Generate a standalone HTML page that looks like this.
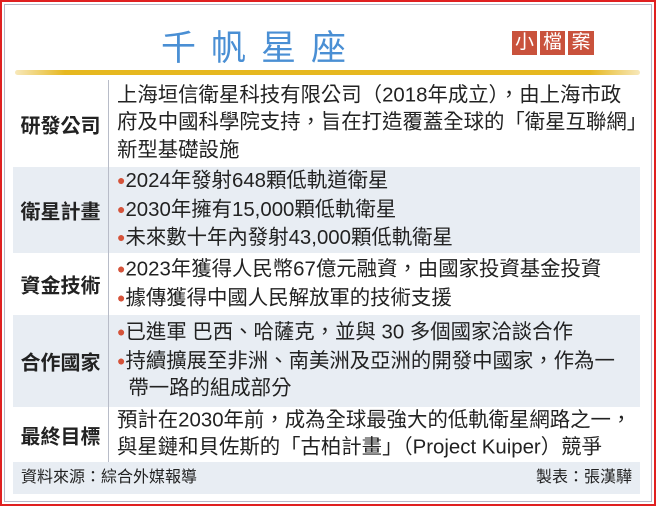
<!DOCTYPE html>
<html><head><meta charset="utf-8"><style>
*{margin:0;padding:0;box-sizing:border-box}
body{width:656px;height:506px;background:#fff;font-family:"Liberation Sans","Noto Sans CJK TC",sans-serif;color:#222;position:relative;overflow:hidden}
.outer{position:absolute;left:0;top:0;width:656px;height:506px;border:2px solid #e02020}
.inner{position:absolute;left:4px;top:4px;width:648px;height:498px;border:1px solid #b8b8c8}
.title{position:absolute;left:161px;top:20px;font-size:35px;color:#4a8fd4;letter-spacing:15px;font-weight:400}
.tag{position:absolute;top:31px;height:24px;width:25px;background:#c9523c;color:#fff;font-size:19px;text-align:center;line-height:24px}
.gold{position:absolute;left:15px;top:70px;width:625px;height:5px;background:linear-gradient(90deg,rgba(230,180,30,0.3),#e6b820 8%,#e6b820 92%,rgba(230,180,30,0.3));border-radius:3px}
.row{position:absolute;left:13px;width:627px}
.g{background:#e8edf3}
.lab{position:absolute;left:0;width:95px;font-size:20px;text-align:center;font-weight:600;top:50%;transform:translateY(-50%)}
.txt{position:absolute;left:104px;right:0;font-size:20.4px;line-height:27.7px;top:50%;transform:translateY(-50%);white-space:nowrap;font-variant-east-asian:full-width}
.b{color:#d5533a;font-size:14px;vertical-align:2px}
.vl{position:absolute;left:108px;top:80px;width:1px;height:382px;background:#b8bcc8}
.foot{position:absolute;left:13px;top:462px;width:627px;height:32px;background:#e8edf3;font-size:16px;line-height:32px;padding:0 8px}
</style></head><body>
<div class="outer"></div><div class="inner"></div>
<div class="title">千帆星座</div>
<div class="tag" style="left:512px">小</div><div class="tag" style="left:540px">檔</div><div class="tag" style="left:568px;width:26px">案</div>
<div class="gold"></div>
<div class="row" style="top:80px;height:87px"><div class="lab">研發公司</div><div class="txt">上海垣信衛星科技有限公司（2018年成立），由上海市政<br>府及中國科學院支持，旨在打造覆蓋全球的「衛星互聯網」<br>新型基礎設施</div></div>
<div class="row g" style="top:167px;height:86px"><div class="lab">衛星計畫</div><div class="txt"><span class="b">●</span>2024年發射648顆低軌道衛星<br><span class="b">●</span>2030年擁有15,000顆低軌衛星<br><span class="b">●</span>未來數十年內發射43,000顆低軌衛星</div></div>
<div class="row" style="top:253px;height:62px"><div class="lab">資金技術</div><div class="txt"><span class="b">●</span>2023年獲得人民幣67億元融資，由國家投資基金投資<br><span class="b">●</span>據傳獲得中國人民解放軍的技術支援</div></div>
<div class="row g" style="top:315px;height:92px"><div class="lab">合作國家</div><div class="txt"><span class="b">●</span>已進軍 巴西、哈薩克，並與 30 多個國家洽談合作<br><span class="b">●</span>持續擴展至非洲、南美洲及亞洲的開發中國家，作為一<br>&nbsp;&nbsp;帶一路的組成部分</div></div>
<div class="row" style="top:407px;height:55px"><div class="lab">最終目標</div><div class="txt">預計在2030年前，成為全球最強大的低軌衛星網路之一，<br>與星鏈和貝佐斯的「古柏計畫」（Project Kuiper）競爭</div></div>
<div class="vl"></div>
<div class="foot">資料來源：綜合外媒報導<span style="float:right">製表：張漢驊</span></div>
</body></html>
